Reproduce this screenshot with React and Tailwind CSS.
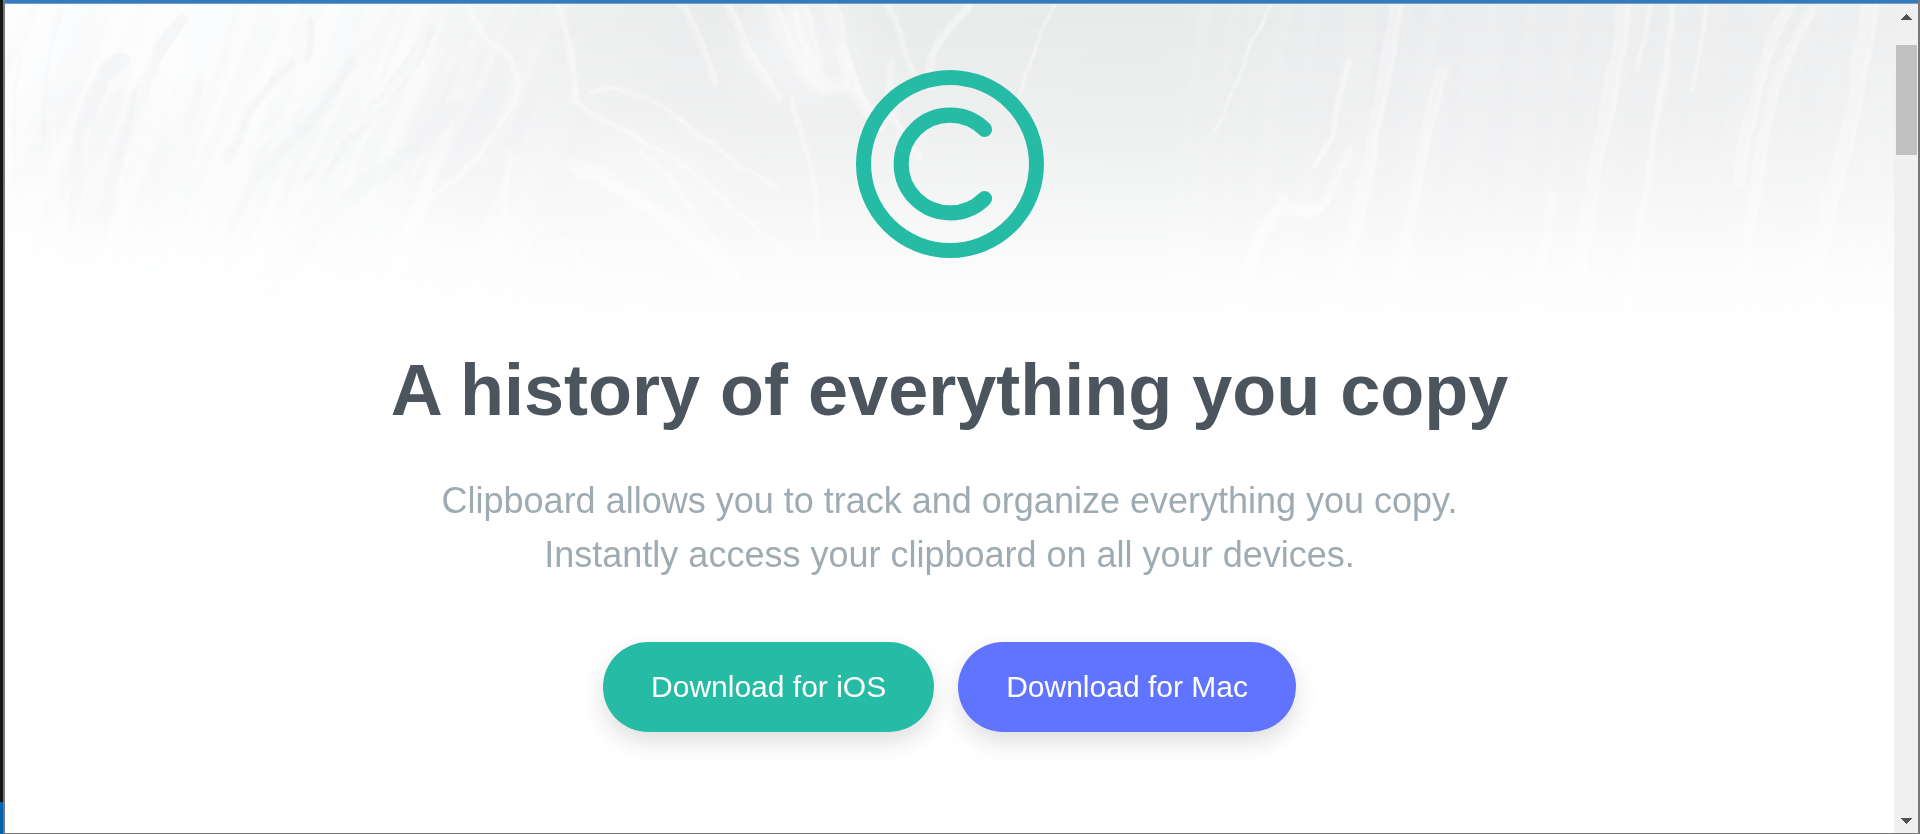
const grayStrokes = [
  ["M62 10 Q44 60 42 150", 2],
  ["M20 60 Q12 100 14 180", 2],
  ["M120 60 Q90 90 84 130 Q80 180 78 220", 18],
  ["M180 20 Q150 60 130 120 Q112 170 104 220", 12],
  ["M202 80 Q190 130 170 180 Q160 210 150 250", 8],
  ["M292 62 Q262 90 245 122 Q236 140 228 160", 8],
  ["M312 20 Q316 40 308 60", 5],
  ["M430 30 Q420 50 400 80 Q330 170 290 190", 12],
  ["M350 60 Q330 110 280 150 Q240 200 220 250", 10],
  ["M452 110 Q420 150 370 180 Q310 230 270 300", 16],
];

const whiteStrokes = [
  ["M52 110 Q54 180 56 280", 5],
  ["M88 130 Q86 200 70 280", 6],
  ["M150 60 Q128 130 112 250", 7],
  ["M218 40 Q190 130 140 270", 9],
  ["M285 40 Q240 100 220 150 Q190 210 170 260", 8],
  ["M330 40 Q300 110 262 140 Q230 190 205 290", 8],
  ["M372 50 Q330 110 300 180 Q270 240 230 310", 8],
  ["M430 20 Q400 100 350 130 Q310 170 285 240", 7],
  ["M465 4 Q480 40 508 54 Q524 80 508 110 Q480 160 430 200 Q390 250 340 310", 5],
  ["M556 4 Q572 40 574 100", 5],
  ["M522 300 Q518 232 545 228", 5],
  ["M505 300 Q500 220 510 150", 6],
  ["M575 100 Q620 130 660 150 Q720 190 790 260", 4],
  ["M590 92 Q640 80 690 130 Q730 160 780 190", 3],
  ["M572 165 Q600 172 640 200 Q680 226 740 286", 14],
  ["M580 175 Q610 182 650 208 Q700 240 730 290", 8],
  ["M564 240 Q590 270 640 310", 8],
  ["M640 150 Q690 200 735 275", 5],
  ["M680 4 Q704 40 716 82", 7],
  ["M728 4 Q742 50 780 96", 8],
  ["M770 4 Q790 60 820 90", 14],
  ["M790 14 Q800 50 820 82 Q830 92 842 84", 16],
  ["M800 4 Q810 40 816 60", 18],
  ["M830 4 Q842 50 852 84 Q860 108 880 126", 13],
  ["M844 50 Q856 90 880 130", 8],
  ["M888 4 Q898 30 908 60 Q918 74 914 90", 5],
  ["M890 60 Q892 90 892 118 Q904 140 918 156", 7],
  ["M968 4 Q940 34 932 56 Q930 72 932 86", 8],
  ["M1056 4 Q1030 50 1016 110", 2],
  ["M792 96 Q810 160 820 246", 2],
  ["M1272 4 Q1244 60 1215 130", 2],
  ["M1347 60 Q1336 110 1332 134 Q1322 156 1314 166", 5],
  ["M1350 150 Q1330 196 1320 206 Q1305 222 1284 200 Q1262 230 1250 256 Q1236 300 1226 340", 9],
  ["M1324 200 Q1300 216 1278 214 Q1256 240 1246 270", 14],
  ["M1397 4 Q1388 70 1376 126 Q1366 190 1346 260 Q1336 300 1328 340", 13],
  ["M1442 70 Q1424 140 1408 230 Q1398 270 1392 320", 11],
  ["M1625 4 Q1616 70 1604 120 Q1592 190 1576 300", 15],
  ["M1552 196 Q1544 260 1524 340", 9],
  ["M1673 4 Q1664 80 1652 150 Q1642 220 1626 310", 5],
  ["M1650 4 Q1646 40 1638 70", 4],
  ["M1705 4 Q1700 50 1692 90", 4],
  ["M1812 10 Q1776 70 1766 130 Q1754 190 1744 290", 10],
  ["M1790 4 Q1750 80 1740 180", 12],
  ["M1870 4 Q1860 80 1848 140 Q1824 210 1810 310", 17],
];

function PaintedBackdrop() {
  return (
    <svg
      aria-hidden="true"
      viewBox="5 4 1889 340"
      preserveAspectRatio="none"
      className="absolute inset-x-0 top-0 h-[340px] w-full"
    >
      <defs>
        <linearGradient id="tone" x1="0" x2="1" y1="0" y2="0">
          <stop offset="0" stopColor="#fcfdfe" />
          <stop offset="0.16" stopColor="#fafbfc" />
          <stop offset="0.22" stopColor="#f7f8f9" />
          <stop offset="0.3" stopColor="#eeefef" />
          <stop offset="0.36" stopColor="#ebeced" />
          <stop offset="0.6" stopColor="#e9ebeb" />
          <stop offset="0.75" stopColor="#ebecee" />
          <stop offset="0.9" stopColor="#ecedee" />
          <stop offset="1" stopColor="#eeeff0" />
        </linearGradient>
        <linearGradient id="fade" x1="0" x2="0" y1="0" y2="1">
          <stop offset="0" stopColor="#fff" stopOpacity="0" />
          <stop offset="0.35" stopColor="#fff" stopOpacity="0.24" />
          <stop offset="0.6" stopColor="#fff" stopOpacity="0.56" />
          <stop offset="0.78" stopColor="#fff" stopOpacity="0.83" />
          <stop offset="0.97" stopColor="#fff" stopOpacity="1" />
        </linearGradient>
        <linearGradient id="leftFade" x1="0" x2="1" y1="0" y2="0">
          <stop offset="0" stopColor="#fff" />
          <stop offset="0.7" stopColor="#fff" />
          <stop offset="1" stopColor="#000" />
        </linearGradient>
        <mask id="leftMask" maskUnits="userSpaceOnUse" x="5" y="4" width="600" height="340">
          <rect x="5" y="4" width="600" height="340" fill="url(#leftFade)" />
        </mask>
        <filter id="brush" x="-5%" y="-5%" width="110%" height="110%">
          <feTurbulence type="fractalNoise" baseFrequency="0.03 0.02" numOctaves="3" seed="4" result="noise" />
          <feDisplacementMap in="SourceGraphic" in2="noise" scale="9" xChannelSelector="R" yChannelSelector="G" />
          <feGaussianBlur stdDeviation="1" />
        </filter>
        <filter id="wide" x="-20%" y="-20%" width="140%" height="140%">
          <feGaussianBlur stdDeviation="22" />
        </filter>
        <filter id="bristle" x="0" y="0" width="100%" height="100%">
          <feTurbulence type="fractalNoise" baseFrequency="0.05 0.004" numOctaves="3" seed="11" />
          <feColorMatrix
            type="matrix"
            values="0 0 0 0 1  0 0 0 0 1  0 0 0 0 1  5 0 0 0 -2.200"
          />
        </filter>
        <filter id="bristleDark" x="0" y="0" width="100%" height="100%">
          <feTurbulence type="fractalNoise" baseFrequency="0.035 0.005" numOctaves="3" seed="7" />
          <feColorMatrix
            type="matrix"
            values="0 0 0 0 0.900  0 0 0 0 0.915  0 0 0 0 0.925  5 0 0 0 -2.200"
          />
        </filter>
      </defs>
      <rect x="5" y="4" width="1889" height="340" fill="url(#tone)" />
      <g filter="url(#wide)">
        <ellipse cx="100" cy="170" rx="80" ry="90" fill="#f3f4f6" />
        <ellipse cx="300" cy="190" rx="120" ry="80" fill="#f3f5f6" />
        <ellipse cx="480" cy="150" rx="80" ry="90" fill="#eeeff1" />
        <ellipse cx="640" cy="190" rx="80" ry="60" fill="#f1f2f3" />
        <ellipse cx="800" cy="50" rx="60" ry="50" fill="#f2f3f4" />
      </g>
      <g mask="url(#leftMask)">
        <g transform="rotate(22 300 170)">
          <rect x="-60" y="-200" width="760" height="760" filter="url(#bristleDark)" opacity="0.300" />
          <rect x="-60" y="-200" width="760" height="760" filter="url(#bristle)" opacity="0.450" />
        </g>
      </g>
      <g transform="rotate(9 1560 170)">
        <rect x="1180" y="-120" width="780" height="600" filter="url(#bristle)" opacity="0.100" />
      </g>
      <g filter="url(#brush)" fill="none" strokeLinecap="round">
        {grayStrokes.map(([d, width]) => (
          <path key={d} d={d} stroke="#e9ecee" strokeOpacity="0.4" strokeWidth={width} />
        ))}
        {whiteStrokes.map(([d, width]) => (
          <g key={d} stroke="#fcfdfd">
            <path d={d} strokeOpacity="0.35" strokeWidth={width} />
            <path d={d} strokeOpacity="0.4" strokeWidth="2" transform={`translate(${width / 3} 0)`} />
            <path d={d} strokeOpacity="0.3" strokeWidth="1" transform={`translate(${-width / 2} 3)`} />
            <path d={d} strokeOpacity="0.25" strokeWidth="1" transform={`translate(${width} -4)`} />
          </g>
        ))}
      </g>
      <rect x="5" y="4" width="1889" height="340" fill="url(#fade)" />
    </svg>
  );
}

function Logo() {
  return (
    <svg
      role="img"
      aria-label="Clipboard"
      viewBox="0 0 25 25"
      className="size-[188px]"
      fill="none"
      stroke="#26bba5"
      strokeWidth="2"
      strokeLinecap="round"
    >
      <circle cx="12.5" cy="12.5" r="11.5" />
      <path d="M17.1 7.9a6.5 6.5 0 1 0 0 9.2" />
    </svg>
  );
}

function DownloadLink({ className, children }) {
  return (
    <a
      href="#download"
      className={`rounded-full px-12 text-[30px] leading-[90px] text-white shadow-[0_10px_24px_rgba(0,0,0,0.13)] ${className}`}
    >
      {children}
    </a>
  );
}

function ScrollBar() {
  return (
    <div className="flex w-6 shrink-0 flex-col items-center bg-[#f0f0f0]">
      <button type="button" aria-label="Scroll up" className="flex h-[41px] w-full justify-center pt-[10px]">
        <svg viewBox="0 0 11 6" className="h-[6px] w-[11px]" shapeRendering="crispEdges">
          <path d="M5.500 0 11 6H0z" fill="#505050" />
        </svg>
      </button>
      <div className="h-[110px] w-[21px] bg-[#c1c1c1]" />
      <button type="button" aria-label="Scroll down" className="mt-auto flex h-6 w-full justify-center pt-[9px]">
        <svg viewBox="0 0 11 6" className="h-[6px] w-[11px]" shapeRendering="crispEdges">
          <path d="M0 0H11L5.500 6z" fill="#505050" />
        </svg>
      </button>
    </div>
  );
}

export default function App() {
  return (
    <div className="flex min-h-screen bg-white font-['Liberation_Sans',Arial,sans-serif]">
      <div className="flex w-[3px] shrink-0 flex-col">
        <div className="flex-1 bg-[#161616]" />
        <div className="h-8 bg-[#0063b1]" />
      </div>
      <div className="flex min-w-0 flex-1 flex-col border-r-2 border-b border-l-2 border-[#777777]">
        <div className="h-1 shrink-0 border-b border-[#6fa0d0] bg-[#3679bc]" />
        <div className="flex flex-1">
          <main className="relative min-w-0 flex-1 overflow-hidden">
            <PaintedBackdrop />
            <div className="relative flex flex-col items-center px-6 pt-[66px] pb-24 text-center">
              <Logo />
              <h1 className="mt-24 text-[72px] leading-[72px] font-bold text-[#4c545d]">
                A history of everything you copy
              </h1>
              <p className="mt-12 max-w-[1080px] text-[36px] leading-[54px] text-[#9fabb3]">
                Clipboard allows you to track and organize everything you copy. Instantly access your
                clipboard on all your devices.
              </p>
              <div className="mt-[60px] flex flex-wrap justify-center gap-6">
                <DownloadLink className="bg-[#26bba5]">Download for iOS</DownloadLink>
                <DownloadLink className="bg-[#6174ff]">Download for Mac</DownloadLink>
              </div>
            </div>
          </main>
          <ScrollBar />
        </div>
      </div>
    </div>
  );
}
